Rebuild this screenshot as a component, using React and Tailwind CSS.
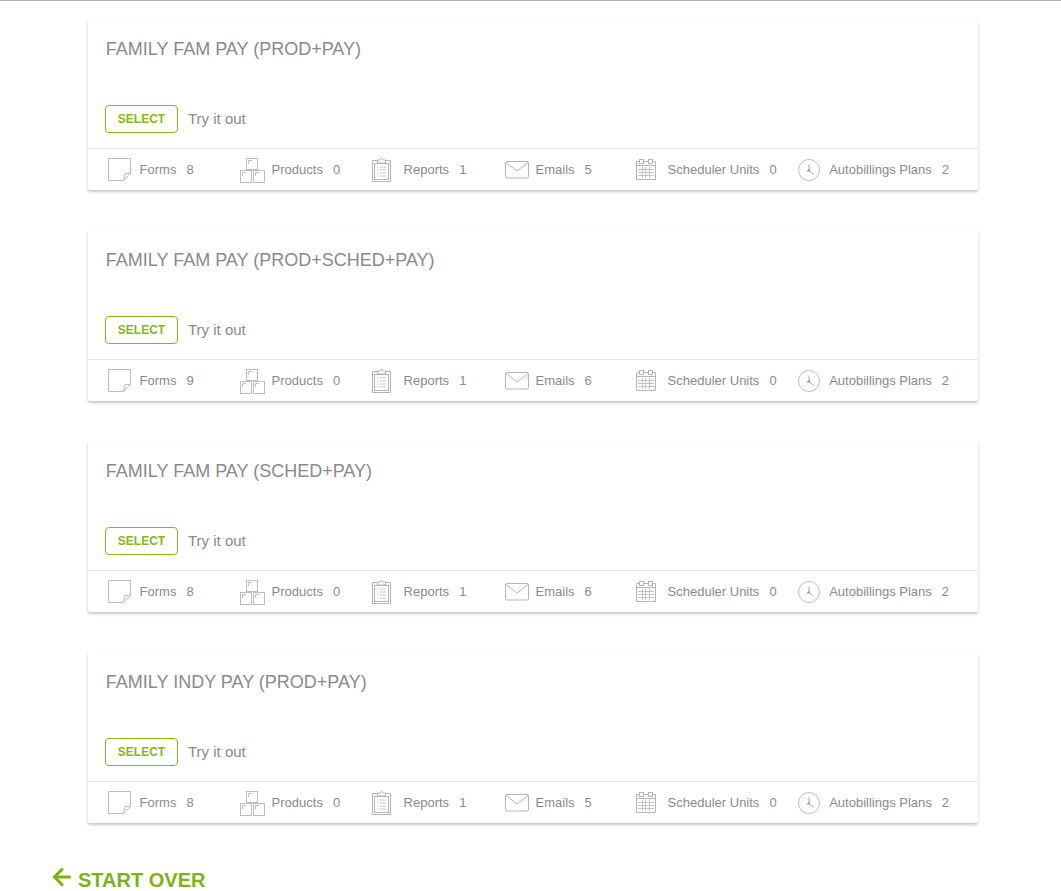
import { ArrowLeft } from "lucide-react";

const plans = [
  { name: "FAMILY FAM PAY (PROD+PAY)", counts: [8, 0, 1, 5, 0, 2] },
  { name: "FAMILY FAM PAY (PROD+SCHED+PAY)", counts: [9, 0, 1, 6, 0, 2] },
  { name: "FAMILY FAM PAY (SCHED+PAY)", counts: [8, 0, 1, 6, 0, 2] },
  { name: "FAMILY INDY PAY (PROD+PAY)", counts: [8, 0, 1, 5, 0, 2] },
];

function FormIcon() {
  return (
    <svg width="24" height="24" viewBox="0 0 24 24" fill="none" stroke="#bdbdbd" strokeWidth="1" className="mt-[1px]">
      <path d="M0.5 0.5H22.5V15.5L15.5 22.5H0.5Z" />
      <path d="M22.5 15.5H17L15.5 22.5" />
    </svg>
  );
}

function ProductIcon() {
  return (
    <svg width="26" height="26" viewBox="0 0 26 26" fill="none" stroke="#bdbdbd" strokeWidth="1" className="mt-[3px]">
      <rect x="6.5" y="0.5" width="11" height="11" />
      <rect x="0.5" y="12.5" width="11" height="12" />
      <rect x="13.5" y="12.5" width="11" height="12" />
      <path d="M8.5 6V2.5H12M2.5 18V14.5H6M15.5 18V14.5H19" />
    </svg>
  );
}

function ReportIcon() {
  return (
    <svg width="19" height="25" viewBox="0 0 19 25" fill="none" stroke="#b5b5b5" strokeWidth="1">
      <path d="M5.5 3.5H0.5V24.5H18.5V3.5H13.5" />
      <path d="M5.5 6V3H8Q9.5 -0.5 11 3H13.5V6Z" />
      <rect x="2.5" y="6.5" width="14" height="16" />
      <path d="M5 10H6M7.5 10H14M5 13H6M7.5 13H14M5 16H6M7.5 16H14M5 19H6M7.5 19H14" stroke="#c4c4c4" />
    </svg>
  );
}

function MailIcon() {
  return (
    <svg width="24" height="18" viewBox="0 0 24 18" fill="none" stroke="#b5b5b5" strokeWidth="1" className="ml-[1px]">
      <rect x="0.5" y="0.5" width="23" height="16.5" rx="1.5" />
      <path d="M1 1.5L12 10L23 1.5" />
    </svg>
  );
}

function CalendarIcon() {
  return (
    <svg width="20" height="21" viewBox="0 0 20 21" fill="none" stroke="#b5b5b5" strokeWidth="1">
      <path d="M3.5 2.5H0.5V20.5H19.5V2.5H16.5M7.5 2.5H12.5" />
      <rect x="3.5" y="0.5" width="4" height="4" />
      <rect x="12.5" y="0.5" width="4" height="4" />
      <path d="M0.5 6.5H19.5" />
      <path d="M2 10.5H18M2 13.5H18M2 16.5H18M6.5 8V19M9.5 8V19M13.5 8V19" stroke="#c4c4c4" />
    </svg>
  );
}

function ClockIcon() {
  return (
    <svg width="22" height="22" viewBox="0 0 22 22" fill="none" stroke="#bdbdbd" strokeWidth="1">
      <circle cx="11" cy="11" r="10.5" />
      <path d="M11 5.5V11L15.5 15.5" stroke="#a8a8a8" />
      <path d="M8 12.5H12V9.5Z" fill="#9a9a9a" stroke="none" />
    </svg>
  );
}

const stats = [
  { label: "Forms", icon: FormIcon },
  { label: "Products", icon: ProductIcon },
  { label: "Reports", icon: ReportIcon },
  { label: "Emails", icon: MailIcon },
  { label: "Scheduler Units", icon: CalendarIcon },
  { label: "Autobillings Plans", icon: ClockIcon },
];

function PlanCard({ plan }) {
  return (
    <div className="w-[890px] h-[171px] ml-[88px] mb-[40px] bg-white rounded-[2px] shadow-[0_2px_3px_rgba(0,0,0,0.22),0_0_2px_rgba(0,0,0,0.04)]">
      <div className="h-[129px] pl-[17.8px] pt-[18px]">
        <div className="text-[18px] leading-[24px] text-[#8a8a8a]">{plan.name}</div>
        <div className="flex items-center mt-[44px] ml-[-0.8px]">
          <button className="w-[73px] h-[28px] border border-[#86b817] rounded-[4px] text-[12px] font-bold text-[#86b817]">SELECT</button>
          <span className="ml-[10px] text-[15px] text-[#8a8a8a]">Try it out</span>
        </div>
      </div>
      <div className="h-[42px] border-t border-[#e5e5e5] pl-[20px] flex items-center">
        {stats.map((s, i) => {
          const Icon = s.icon;
          return (
            <div key={s.label} className="flex items-center min-w-[132px] pr-[21px] text-[13px] text-[#8a8a8a]">
              <div className="w-[31.6px] shrink-0">
                <Icon />
              </div>
              <span>{s.label}</span>
              <span className="ml-[10px]">{plan.counts[i]}</span>
            </div>
          );
        })}
      </div>
    </div>
  );
}

export default function App() {
  return (
    <div className="h-[891px] overflow-hidden bg-white font-['Liberation_Sans',Arial,sans-serif] border-t border-[#b0b0b0]">
      <div className="pt-[18px]">
        {plans.map((p) => (
          <PlanCard key={p.name} plan={p} />
        ))}
      </div>
      <div className="flex items-center ml-[49px] mt-[45px] text-[20px] font-bold text-[#7fb117] leading-[24px]">
        <ArrowLeft size={26} strokeWidth={2.8} className="mt-[-7px] mr-[3px]" />
        <span>START OVER</span>
      </div>
    </div>
  );
}
